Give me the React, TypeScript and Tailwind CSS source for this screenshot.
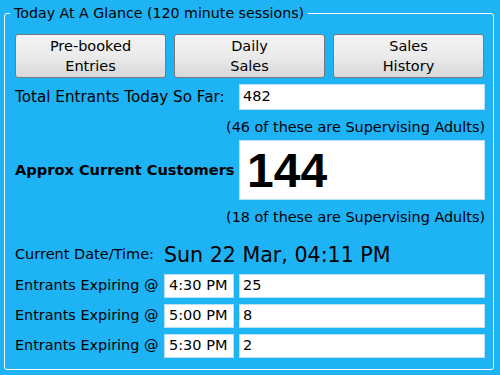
const expiring = [
  { time: '4:30 PM', count: '25' },
  { time: '5:00 PM', count: '8' },
  { time: '5:30 PM', count: '2' },
];

const font = "font-['DejaVu_Sans',sans-serif]";

function GlanceButton({ top, bottom }: { top: string; bottom: string }) {
  return (
    <button className="h-[44px] rounded-[3px] border border-[#7a7a7a] bg-gradient-to-b from-[#f3f3f3] via-[#ebebeb] to-[#d8d8d8] text-[14.5px] leading-[20px] text-black">
      {top}
      <br />
      {bottom}
    </button>
  );
}

function Box({ children, className = '' }: { children: React.ReactNode; className?: string }) {
  return (
    <div className={`flex items-center whitespace-nowrap bg-white border border-[#b9e1f5] px-[3px] text-[14.5px] text-black ${className}`}>
      {children}
    </div>
  );
}

export default function App() {
  return (
    <div className={`w-[500px] h-[375px] bg-[#1db3f5] px-[4px] pt-[3px] ${font}`}>
      <fieldset className="w-[490px] h-[367px] border border-white rounded-[3px] pl-[10px] pr-[8px]">
        <legend className="-ml-[5px] px-[4px] text-[14.2px] leading-[20px] text-black">
          Today At A Glance (120 minute sessions)
        </legend>

        <div className="grid grid-cols-3 gap-2 mt-[11px] mr-[1px]">
          <GlanceButton top="Pre-booked" bottom="Entries" />
          <GlanceButton top="Daily" bottom="Sales" />
          <GlanceButton top="Sales" bottom="History" />
        </div>

        <div className="flex items-center mt-[6px]">
          <div className="w-[224px] text-[15.2px] text-black">Total Entrants Today So Far:</div>
          <Box className="flex-1 h-[26px]">482</Box>
        </div>
        <div className="text-right text-[14.4px] leading-[20px] text-black mt-[7px]">
          (46 of these are Supervising Adults)
        </div>

        <div className="flex items-center mt-[3px]">
          <div className="w-[224px] text-[14.6px] font-bold text-black">Approx Current Customers</div>
          <Box className="flex-1 h-[60px] px-[7px]">
            <span className="font-['Liberation_Sans',sans-serif] font-bold text-[48px] leading-none pt-[2px]">144</span>
          </Box>
        </div>
        <div className="text-right text-[14.4px] leading-[20px] text-black mt-[7px]">
          (18 of these are Supervising Adults)
        </div>

        <div className="flex items-center mt-[16px] h-[24px]">
          <div className="w-[149px] text-[14.5px] text-black">Current Date/Time:</div>
          <div className="text-[20.6px] text-black">Sun 22 Mar, 04:11 PM</div>
        </div>

        <div className="flex flex-col gap-[6px] mt-[7px]">
          {expiring.map(row => (
            <div key={row.time} className="flex items-center gap-[5px]">
              <div className="w-[144px] text-[14.4px] text-black">Entrants Expiring @</div>
              <Box className="w-[70px] h-[24px] px-[4px]">{row.time}</Box>
              <Box className="flex-1 h-[24px]">{row.count}</Box>
            </div>
          ))}
        </div>
      </fieldset>
    </div>
  );
}
